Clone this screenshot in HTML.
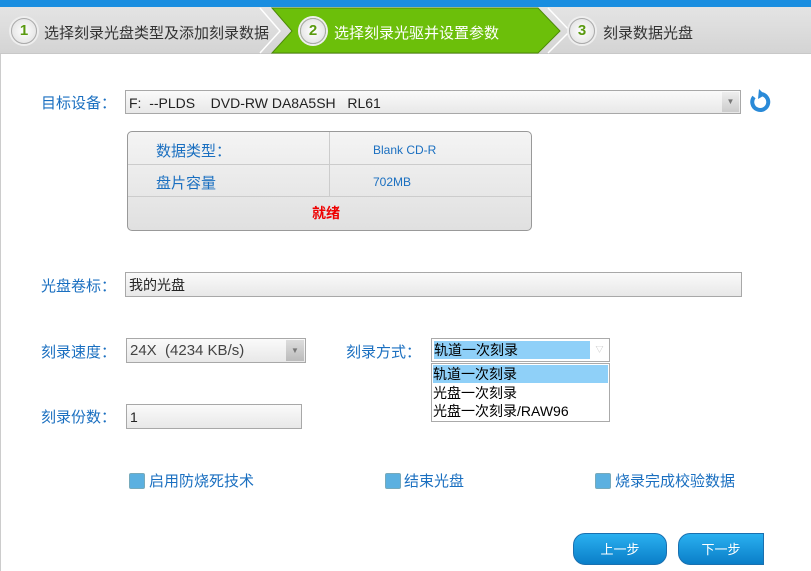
<!DOCTYPE html>
<html><head><meta charset="utf-8"><style>
body{margin:0;width:811px;height:571px;overflow:hidden;background:#fff;position:relative;font-family:"Liberation Sans","Noto Sans CJK SC",sans-serif;font-size:14px}
.a{position:absolute}
.lbl{color:#1a6fc0;font-size:15px}
.step{font-size:15px;color:#333}
.num{width:24px;height:24px;border-radius:50%;background:radial-gradient(#fff,#ddd);border:1px solid #aaa;color:#5a9a10;font-weight:bold;font-size:15px;text-align:center;line-height:24px;box-shadow:0 0 0 2px #eee}
.inp{border:1px solid #a8a8a8;background:linear-gradient(#fafafa,#e8e8e8);height:22px;line-height:22px;padding-left:3px;color:#222;box-sizing:border-box}
.chk{width:14px;height:14px;background:#5bb0e0;border:1px solid #7ab;border-radius:2px}
.btn{width:94px;height:32px;border-radius:12px;background:linear-gradient(#2ab0f0,#0a7ec8);color:#fff;text-align:center;line-height:32px;font-size:13px;border:1px solid #1a70b0;box-sizing:border-box}
</style></head><body>
<div class="a" style="left:0;top:0;width:811px;height:7px;background:#1a8ee0"></div>
<div class="a" style="left:0;top:7px;width:811px;height:46px;background:linear-gradient(#e4e4e4,#d4d4d4);border-bottom:1px solid #c8c8c8"></div>
<svg class="a" style="left:0;top:7px" width="811" height="47"><polygon points="272,1 538,1 560,24 538,46 272,46 292,24" fill="#6cbf0a" stroke="#4d8a08"/><polyline points="260,1 280,24 260,46" fill="none" stroke="#fff" stroke-width="1.5"/><polyline points="548,1 570,24 548,46" fill="none" stroke="#fff" stroke-width="1.5"/></svg>
<div class="a num" style="left:11px;top:18px">1</div>
<div class="a step" style="left:44px;top:22px">选择刻录光盘类型及添加刻录数据</div>
<div class="a num" style="left:300px;top:18px">2</div>
<div class="a step" style="left:334px;top:22px;color:#fff">选择刻录光驱并设置参数</div>
<div class="a num" style="left:569px;top:18px">3</div>
<div class="a step" style="left:603px;top:22px">刻录数据光盘</div>
<div class="a" style="left:0;top:54px;width:1px;height:517px;background:#ccc"></div>

<div class="a lbl" style="left:41px;top:92px">目标设备：</div>
<div class="a inp" style="left:125px;top:90px;width:616px;height:24px;line-height:24px">F:&nbsp; --PLDS &nbsp;&nbsp; DVD-RW DA8A5SH &nbsp;&nbsp;RL61</div>
<div class="a" style="left:722px;top:92px;width:17px;height:20px;background:linear-gradient(#eee,#ccc);font-size:8px;color:#777;text-align:center;line-height:20px">▼</div>
<svg class="a" style="left:747px;top:89px" width="26" height="26"><path d="M7 8 A8 8 0 1 0 13 5" fill="none" stroke="#2a8ad8" stroke-width="4"/><polygon points="12,0 18,6 11,10" fill="#2a8ad8"/></svg>

<div class="a" style="left:127px;top:131px;width:403px;height:98px;border:1px solid #999;border-radius:5px;background:linear-gradient(#f4f4f4,#e0e0e0);overflow:hidden">
 <div class="a" style="left:0;top:32px;width:403px;height:1px;background:#ccc"></div>
 <div class="a" style="left:0;top:64px;width:403px;height:1px;background:#ccc"></div>
 <div class="a" style="left:201px;top:0;width:1px;height:64px;background:#ccc"></div>
 <div class="a lbl" style="left:28px;top:8px">数据类型：</div>
 <div class="a lbl" style="left:245px;top:11px;font-size:12px">Blank CD-R</div>
 <div class="a lbl" style="left:28px;top:40px">盘片容量</div>
 <div class="a lbl" style="left:245px;top:43px;font-size:12px">702MB</div>
 <div class="a" style="left:184px;top:71px;color:#e00;font-weight:bold">就绪</div>
</div>

<div class="a lbl" style="left:41px;top:275px">光盘卷标：</div>
<div class="a inp" style="left:125px;top:272px;width:617px;height:25px;line-height:24px">我的光盘</div>

<div class="a lbl" style="left:41px;top:341px">刻录速度：</div>
<div class="a inp" style="left:126px;top:338px;width:180px;height:25px;line-height:24px;font-size:15px;color:#444">24X &nbsp;(4234 KB/s)</div>
<div class="a" style="left:286px;top:340px;width:18px;height:21px;background:linear-gradient(#ddd,#bbb);font-size:8px;color:#777;text-align:center;line-height:21px">▼</div>

<div class="a lbl" style="left:346px;top:341px">刻录方式：</div>
<div class="a" style="left:431px;top:338px;width:179px;height:24px;border:1px solid #aaa;box-sizing:border-box;background:#fff"></div>
<div class="a" style="left:434px;top:341px;width:156px;height:18px;background:#8fd0f8;line-height:18px;font-size:14px">轨道一次刻录</div>
<div class="a" style="left:591px;top:341px;width:17px;height:18px;font-size:8px;color:#bbb;text-align:center;line-height:18px">▽</div>
<div class="a" style="left:431px;top:363px;width:179px;height:59px;border:1px solid #aaa;box-sizing:border-box;background:#fff;font-size:14px;line-height:18px">
 <div style="background:#8fd0f8;margin:1px">轨道一次刻录</div><div style="padding-left:1px">光盘一次刻录</div><div style="padding-left:1px">光盘一次刻录/RAW96</div></div>

<div class="a lbl" style="left:41px;top:406px">刻录份数：</div>
<div class="a inp" style="left:126px;top:404px;width:176px;height:25px;line-height:24px">1</div>

<div class="a chk" style="left:129px;top:473px"></div><div class="a lbl" style="left:149px;top:470px">启用防烧死技术</div>
<div class="a chk" style="left:385px;top:473px"></div><div class="a lbl" style="left:404px;top:470px">结束光盘</div>
<div class="a chk" style="left:595px;top:473px"></div><div class="a lbl" style="left:615px;top:470px">烧录完成校验数据</div>

<div class="a btn" style="left:573px;top:533px">上一步</div>
<div class="a btn" style="left:678px;top:533px;width:86px;border-radius:12px 0 0 12px">下一步</div>
</body></html>
